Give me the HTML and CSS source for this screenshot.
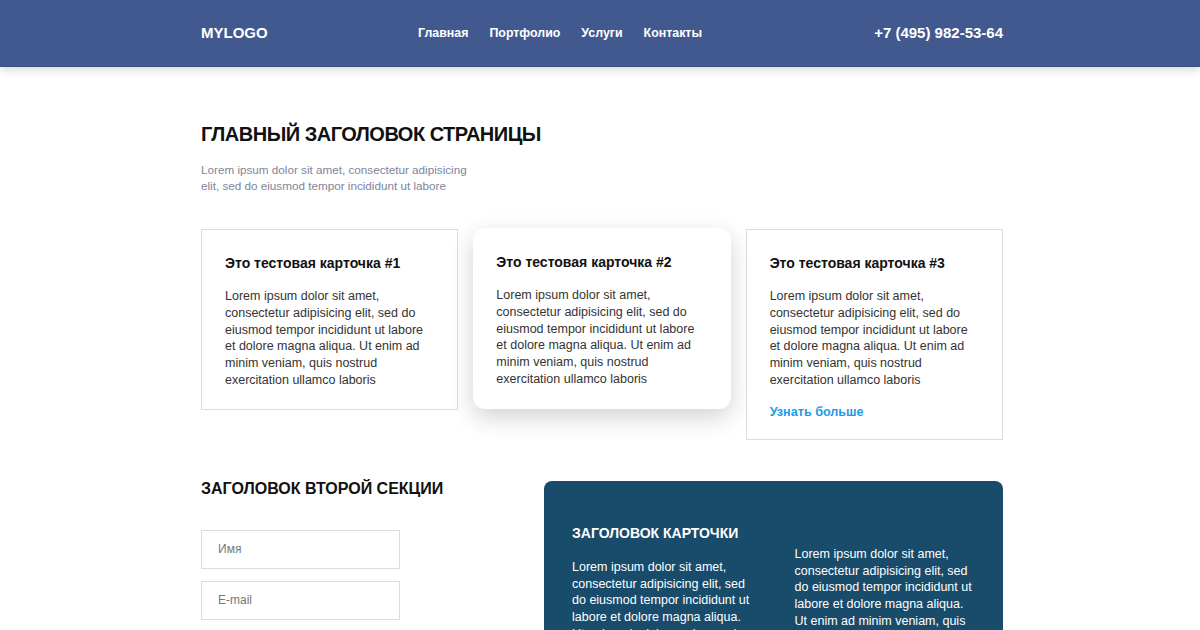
FILE: index.html
```html
<!DOCTYPE html>
<html lang="ru">
<head>
<meta charset="utf-8">
<title>MYLOGO</title>
<link rel="stylesheet" href="styles.css">
</head>
<body>
<header class="header">
  <div class="container header-inner">
    <div class="logo">MYLOGO</div>
    <nav class="nav">
      <a href="#">Главная</a>
      <a href="#">Портфолио</a>
      <a href="#">Услуги</a>
      <a href="#">Контакты</a>
    </nav>
    <div class="phone">+7 (495) 982-53-64</div>
  </div>
</header>
<main class="container">
  <section class="intro">
    <h1 class="title">ГЛАВНЫЙ ЗАГОЛОВОК СТРАНИЦЫ</h1>
    <p class="subtitle">Lorem ipsum dolor sit amet, consectetur adipisicing elit, sed do eiusmod tempor incididunt ut labore</p>
  </section>
  <section class="cards">
    <div class="card">
      <h3 class="card-title">Это тестовая карточка #1</h3>
      <p class="card-text">Lorem ipsum dolor sit amet, consectetur adipisicing elit, sed do eiusmod tempor incididunt ut labore et dolore magna aliqua. Ut enim ad minim veniam, quis nostrud exercitation ullamco laboris</p>
    </div>
    <div class="card card-raised">
      <h3 class="card-title">Это тестовая карточка #2</h3>
      <p class="card-text">Lorem ipsum dolor sit amet, consectetur adipisicing elit, sed do eiusmod tempor incididunt ut labore et dolore magna aliqua. Ut enim ad minim veniam, quis nostrud exercitation ullamco laboris</p>
    </div>
    <div class="card">
      <h3 class="card-title">Это тестовая карточка #3</h3>
      <p class="card-text">Lorem ipsum dolor sit amet, consectetur adipisicing elit, sed do eiusmod tempor incididunt ut labore et dolore magna aliqua. Ut enim ad minim veniam, quis nostrud exercitation ullamco laboris</p>
      <a class="more" href="#">Узнать больше</a>
    </div>
  </section>
  <section class="second">
    <div class="form-col">
      <h2 class="second-title">ЗАГОЛОВОК ВТОРОЙ СЕКЦИИ</h2>
      <form class="form">
        <input class="field" type="text" placeholder="Имя">
        <input class="field" type="text" placeholder="E-mail">
      </form>
    </div>
    <div class="dark-card">
      <div class="dark-col">
        <h3 class="dark-title">ЗАГОЛОВОК КАРТОЧКИ</h3>
        <p class="dark-text">Lorem ipsum dolor sit amet, consectetur adipisicing elit, sed do eiusmod tempor incididunt ut labore et dolore magna aliqua. Ut enim ad minim veniam, quis nostrud exercitation ullamco laboris</p>
      </div>
      <div class="dark-col dark-col-2">
        <p class="dark-text">Lorem ipsum dolor sit amet, consectetur adipisicing elit, sed do eiusmod tempor incididunt ut labore et dolore magna aliqua. Ut enim ad minim veniam, quis nostrud exercitation ullamco laboris</p>
      </div>
    </div>
  </section>
</main>
</body>
</html>
```

FILE: styles.css
```css
* { box-sizing: border-box; }
html, body { margin: 0; padding: 0; }
body {
  font-family: "Liberation Sans", Arial, sans-serif;
  color: #222;
  background: #fff;
  overflow: hidden;
}
.container {
  width: 1200px;
  padding: 0 197px 0 201px;
}
.header {
  background: #42598f;
  height: 67px;
  border-bottom: 1px solid #3a4f84;
  box-shadow: 0 2px 10px rgba(0,0,0,0.18);
  position: relative;
  z-index: 2;
}
.header-inner {
  display: flex;
  align-items: center;
  height: 66px;
}
.logo {
  color: #fff;
  font-weight: 700;
  font-size: 15px;
  width: 217px;
  padding-bottom: 2px;
}
.nav {
  display: flex;
  gap: 21px;
  flex: 1;
}
.nav a {
  color: #fff;
  text-decoration: none;
  font-weight: 700;
  font-size: 12.4px;
}
.phone {
  color: #fff;
  font-weight: 700;
  font-size: 15px;
  padding-bottom: 2px;
}
.intro {
  padding-top: 55px;
}
.title {
  margin: 0;
  font-size: 20px;
  font-weight: 700;
  color: #111;
  letter-spacing: -0.5px;
  line-height: 24px;
}
.subtitle {
  margin: 16px 0 0;
  width: 275px;
  font-size: 11.7px;
  line-height: 16px;
  color: #80859c;
}
.cards {
  display: flex;
  align-items: flex-start;
  gap: 15px;
  margin-top: 35px;
}
.card {
  width: 258px;
  border: 1px solid #dcdcdc;
  padding: 23px 22px 20px 23px;
  background: #fff;
}
.card-raised {
  border: none;
  border-radius: 12px;
  box-shadow: 0 8px 24px rgba(0,0,0,0.18);
  margin-top: -1px;
  padding: 24px 25px 21px 23px;
}
.card-title {
  margin: 0;
  font-size: 14px;
  font-weight: 700;
  color: #111;
  line-height: 20px;
}
.card-text {
  margin: 15px 0 0;
  font-size: 12.5px;
  line-height: 16.8px;
  color: #333;
}
.more {
  display: block;
  margin-top: 15px;
  margin-bottom: -1px;
  color: #1c9be8;
  font-size: 12.6px;
  font-weight: 700;
  text-decoration: none;
  line-height: 16px;
}
.second {
  display: flex;
  margin-top: 41px;
}
.form-col {
  width: 343px;
}
.second-title {
  margin: 0;
  font-size: 16px;
  font-weight: 700;
  color: #111;
  line-height: 16px;
}
.form {
  display: flex;
  flex-direction: column;
  gap: 12px;
  margin-top: 33px;
}
.field {
  width: 199px;
  height: 39px;
  border: 1px solid #dcdcdc;
  padding: 0 16px;
  font-family: "Liberation Sans", Arial, sans-serif;
  font-size: 12px;
  color: #333;
  background: #fff;
  outline: none;
}
.field::placeholder { color: #777; }
.dark-card {
  width: 459px;
  height: 200px;
  background: #194b6a;
  border-radius: 8px;
  margin-top: 0;
  display: flex;
  gap: 42px;
  padding: 43px 28px 0 28px;
}
.dark-col { width: 182px; }
.dark-col-2 { width: 182px; padding-top: 22px; }
.dark-title {
  margin: 0;
  color: #fff;
  font-size: 14px;
  font-weight: 700;
  line-height: 18px;
}
.dark-text {
  margin: 17px 0 0;
  color: #fff;
  font-size: 12.5px;
  line-height: 16.8px;
}
.dark-col-2 .dark-text { margin-top: 0; }
```
